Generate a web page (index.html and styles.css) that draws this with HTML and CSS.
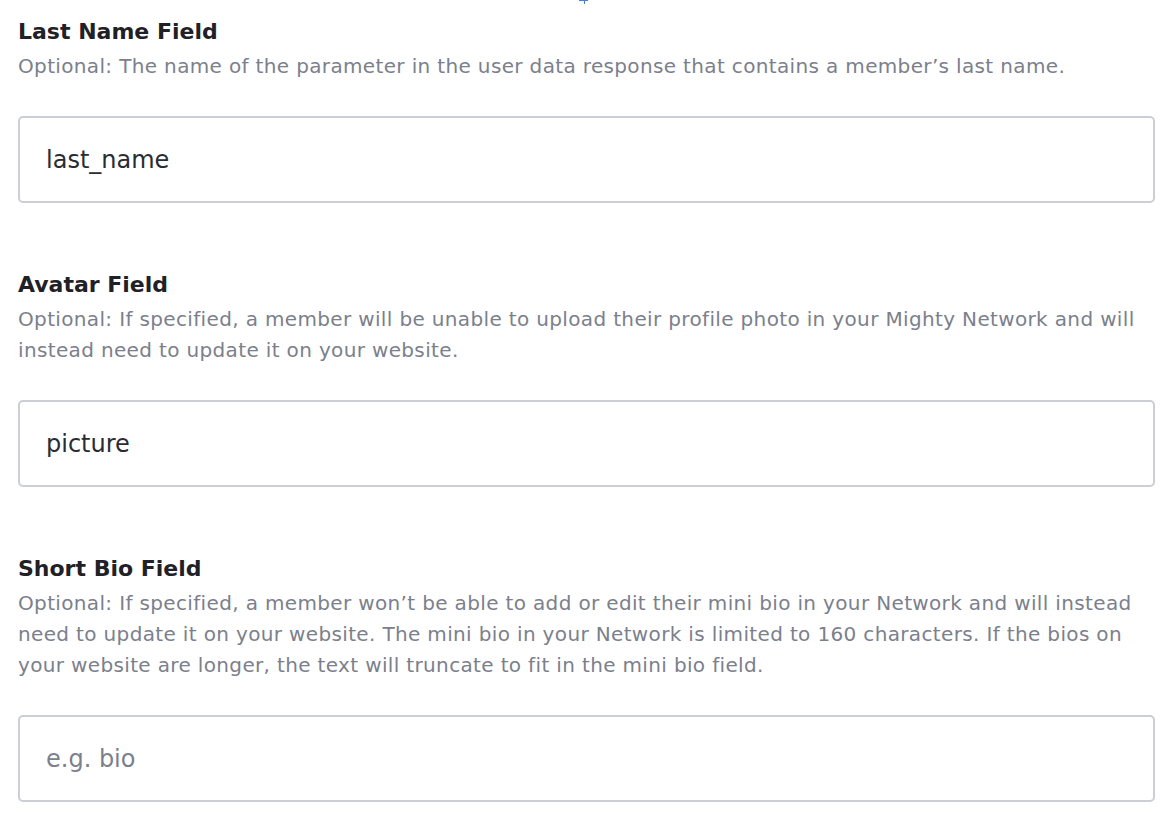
FILE: index.html
```html
<!DOCTYPE html>
<html>
<head>
<meta charset="utf-8">
<link rel="stylesheet" href="styles.css">
</head>
<body>
<div class="caret-mark"><span class="bar"></span><span class="stem"></span></div>
<main class="form">
  <section class="field">
    <h2 class="label">Last Name Field</h2>
    <p class="help">Optional: The name of the parameter in the user data response that contains a member’s last name.</p>
    <div class="input"><span class="value">last_name</span></div>
  </section>
  <section class="field">
    <h2 class="label">Avatar Field</h2>
    <p class="help">Optional: If specified, a member will be unable to upload their profile photo in your Mighty Network and will instead need to update it on your website.</p>
    <div class="input"><span class="value">picture</span></div>
  </section>
  <section class="field">
    <h2 class="label">Short Bio Field</h2>
    <p class="help">Optional: If specified, a member won’t be able to add or edit their mini bio in your Network and will instead need to update it on your website. The mini bio in your Network is limited to 160 characters. If the bios on your website are longer, the text will truncate to fit in the mini bio field.</p>
    <div class="input"><span class="placeholder">e.g. bio</span></div>
  </section>
</main>
</body>
</html>
```
FILE: styles.css
```css
* { box-sizing: border-box; }
html, body { margin: 0; padding: 0; background: #fff; }
body {
  font-family: "DejaVu Sans", "Noto Sans", sans-serif;
  width: 1170px;
  height: 824px;
  overflow: hidden;
  position: relative;
}
.caret-mark {
  position: absolute;
  left: 579px;
  top: 0;
  width: 9px;
  height: 4px;
}
.caret-mark .bar {
  position: absolute; left: 0; top: 0; width: 9px; height: 1px; background: #4a7de0;
}
.caret-mark .stem {
  position: absolute; left: 5px; top: 0; width: 1px; height: 4px; background: #4a7de0;
}
.form {
  display: flex;
  flex-direction: column;
  gap: 68px;
  padding: 18px 15px 0 18px;
}
.field { display: flex; flex-direction: column; }
.label {
  margin: 0;
  font-size: 22px;
  line-height: 28px;
  font-weight: 700;
  color: #1f2127;
}
.help {
  margin: 5px 0 0;
  font-size: 20px;
  letter-spacing: 0.35px;
  line-height: 31px;
  color: #7b808c;
}
.input {
  margin-top: 34px;
  height: 87px;
  border: 2px solid #cbced4;
  border-radius: 5px;
  display: flex;
  align-items: center;
  padding-left: 26px;
  font-size: 24px;
}
.value { color: #2a2c33; }
.placeholder { color: #7b808c; }
```
